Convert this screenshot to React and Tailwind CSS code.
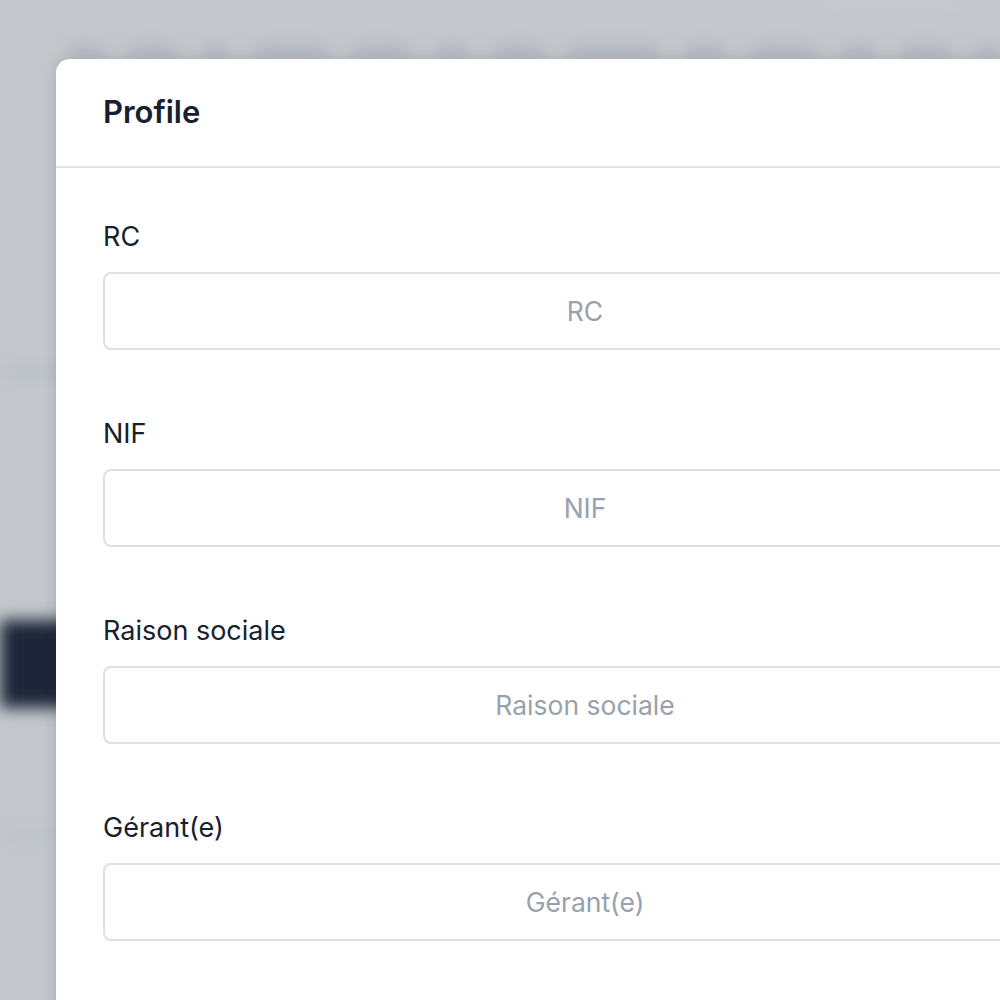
const fields = ["RC", "NIF", "Raison sociale", "Gérant(e)"];

function Backdrop() {
  // blurred page behind the dialog
  return (
    <div className="absolute inset-0 flex flex-col blur-[8px]">
      <div className="ml-[820px] h-[4px] w-[140px] rounded-b-full bg-[#d0d4d8]" />
      <div className="mt-[42px] ml-[70px] flex gap-[26px]">
        {[40, 60, 30, 90, 70, 40, 60, 110, 50, 80, 40, 60, 30].map((w, i) => (
          <div key={i} className="h-[10px] rounded bg-[#a9b0b9]" style={{ width: w }} />
        ))}
      </div>
      <div className="mt-[312px] h-[8px] w-[80px] bg-[#b6bcc4]" />
      <div className="mt-[244px] h-[88px] w-[80px] bg-[#1c2638]" />
      <div className="mt-[120px] h-[10px] w-[80px] bg-[#bcc2c9]" />
    </div>
  );
}

export default function App() {
  return (
    <div className="relative h-screen w-full overflow-hidden bg-[#c4c8cc] font-['Inter',sans-serif]">
      <Backdrop />
      <div className="relative pl-[56px] pt-[59px]">
        <div className="w-[1058px] rounded-t-[14px] bg-white pb-[200px] shadow-[0_0_14px_rgba(30,40,60,0.18)]">
          <div className="flex h-[109px] items-center border-b-2 border-[#dfe3e8] px-[47px]">
            <h2 className="text-[31px] font-semibold text-[#17202f]">Profile</h2>
          </div>
          <div className="flex flex-col gap-[66px] px-[47px] pt-[51px]">
            {fields.map((f) => (
              <div key={f} className="flex flex-col gap-[17px]">
                <label className="text-[27px] leading-[36px] text-[#17202f]">{f}</label>
                <input
                  placeholder={f}
                  className="h-[78px] w-full rounded-[8px] border-2 border-[#dde1e6] bg-white text-center text-[26.5px] text-[#17202f] outline-none placeholder:text-[#98a1ad]"
                />
              </div>
            ))}
          </div>
        </div>
      </div>
    </div>
  );
}
